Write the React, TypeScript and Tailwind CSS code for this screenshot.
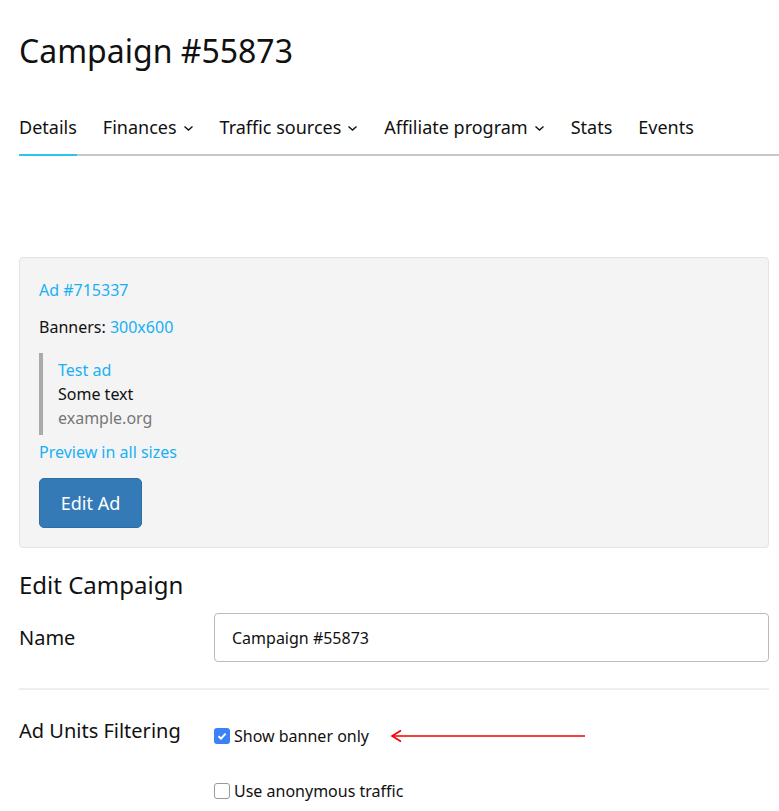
import React from 'react';

const Chevron = () => (
  <svg width="11" height="10" viewBox="0 0 11 10" className="ml-[6px] mt-0.5">
    <path d="M1.5 3.5 L5.5 7 L9.5 3.5" fill="none" stroke="#111" strokeWidth="1.4" />
  </svg>
);

const tabs = [
  { label: 'Details', active: true },
  { label: 'Finances', menu: true },
  { label: 'Traffic sources', menu: true },
  { label: 'Affiliate program', menu: true },
  { label: 'Stats' },
  { label: 'Events' },
];

const App: React.FC = () => {
  return (
    <div className="min-h-screen bg-white text-[#111] font-['Noto_Sans',sans-serif] pl-[19px] overflow-hidden">
      <h1 className="text-[32px] leading-none pt-[35px]">Campaign #55873</h1>

      <nav className="mt-[47px] flex gap-[26px] border-b-2 border-[#c8c8c8]">
        {tabs.map((t) => (
          <div
            key={t.label}
            className={`flex items-center text-[18px] leading-[26px] pb-[14px] -mb-[2px] border-b-2 ${
              t.active ? 'border-[#2fc4f0]' : 'border-transparent'
            }`}
          >
            {t.label}
            {t.menu && <Chevron />}
          </div>
        ))}
      </nav>

      <div className="mt-[101px] w-[750px] bg-[#f4f4f4] border border-[#e3e3e3] rounded px-[19px] pt-[20px] pb-[19px] text-[16px] leading-[24px]">
        <a className="text-[#1ab0f5] block">Ad #715337</a>
        <p className="mt-[13px]">
          Banners: <span className="text-[#1ab0f5]">300x600</span>
        </p>
        <div className="mt-[14px] border-l-4 border-[#aaa] pl-[15px] py-[5px]">
          <div className="text-[#1ab0f5]">Test ad</div>
          <div>Some text</div>
          <div className="text-[#777]">example.org</div>
        </div>
        <a className="block mt-[5px] text-[#1ab0f5]">Preview in all sizes</a>
        <button className="mt-[14px] w-[103px] h-[50px] bg-[#337ab7] border border-[#2e6da4] rounded-[5px] text-white text-[18px]">
          Edit Ad
        </button>
      </div>

      <h2 className="text-[24px] leading-none mt-[25px]">Edit Campaign</h2>

      <div className="w-[750px] mt-[16px] flex items-center">
        <label className="w-[195px] text-[20px]">Name</label>
        <div className="flex-1 h-[49px] border border-[#bbb] rounded flex items-center px-[17px] text-[16px]">
          Campaign #55873
        </div>
      </div>

      <hr className="w-[750px] mt-[26px] border-t-2 border-[#eee]" />

      <div className="w-[750px] mt-[27px] flex">
        <label className="w-[195px] text-[20px] leading-[28px]">Ad Units Filtering</label>
        <div className="flex-1 text-[16px]">
          <div className="flex items-center h-[28px] mt-[5px]">
            <span className="w-[16px] h-[16px] rounded-[3px] bg-[#3b82f6] flex items-center justify-center">
              <svg width="12" height="12" viewBox="0 0 12 12">
                <path d="M2.5 6.2 L5 8.6 L9.6 3.6" fill="none" stroke="white" strokeWidth="2" />
              </svg>
            </span>
            <span className="ml-1">Show banner only</span>
            <svg width="200" height="16" viewBox="0 0 200 16" className="ml-[20px]">
              <path d="M3 8 H196" stroke="#ee0000" strokeWidth="1.6" />
              <path d="M12 2.5 L3 8 L12 13.5" fill="none" stroke="#ee0000" strokeWidth="1.6" />
            </svg>
          </div>
          <div className="flex items-center h-[28px] mt-[27px]">
            <span className="w-[16px] h-[16px] rounded-[3px] border border-[#999] bg-white" />
            <span className="ml-1">Use anonymous traffic</span>
          </div>
        </div>
      </div>
    </div>
  );
};

export default App;
